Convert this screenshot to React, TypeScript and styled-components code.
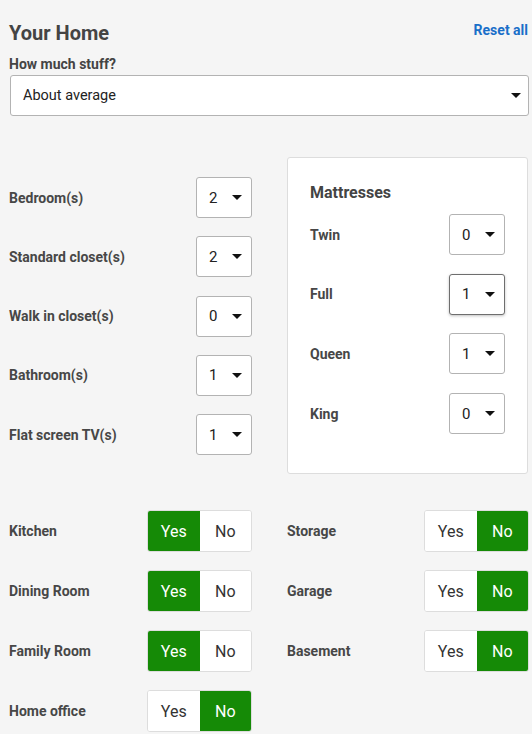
import styled, { createGlobalStyle, css } from 'styled-components';

const GlobalStyle = createGlobalStyle`
  html, body {
    margin: 0;
    padding: 0;
    background: #f5f5f5;
  }

  body {
    font-family: Roboto, "Liberation Sans", Arial, sans-serif;
    color: #444;
  }
`;

type Counter = { label: string; value: number; focused?: boolean };

const rooms: Counter[] = [
  { label: 'Bedroom(s)', value: 2 },
  { label: 'Standard closet(s)', value: 2 },
  { label: 'Walk in closet(s)', value: 0 },
  { label: 'Bathroom(s)', value: 1 },
  { label: 'Flat screen TV(s)', value: 1 },
];

const mattresses: Counter[] = [
  { label: 'Twin', value: 0 },
  { label: 'Full', value: 1, focused: true },
  { label: 'Queen', value: 1 },
  { label: 'King', value: 0 },
];

const leftToggles = [
  { label: 'Kitchen', yes: true },
  { label: 'Dining Room', yes: true },
  { label: 'Family Room', yes: true },
  { label: 'Home office', yes: false },
];

const rightToggles = [
  { label: 'Storage', yes: false },
  { label: 'Garage', yes: false },
  { label: 'Basement', yes: false },
];

function CountRow({ label, value, focused }: Counter) {
  return (
    <Row>
      <Label>{label}</Label>
      <SmallSelect $focused={focused}>
        <span>{value}</span>
        <Caret />
      </SmallSelect>
    </Row>
  );
}

function ToggleRow({ label, yes }: { label: string; yes: boolean }) {
  return (
    <ToggleLine>
      <Label>{label}</Label>
      <Toggle>
        <ToggleOption $active={yes}>Yes</ToggleOption>
        <ToggleOption $active={!yes}>No</ToggleOption>
      </Toggle>
    </ToggleLine>
  );
}

export default function App() {
  return (
    <>
      <GlobalStyle />
      <Page>
        <Header>
          <Title>Your Home</Title>
          <ResetLink href="#">Reset all</ResetLink>
        </Header>
        <FieldLabel>How much stuff?</FieldLabel>
        <WideSelect>
          <span>About average</span>
          <Caret />
        </WideSelect>

        <Columns>
          <RoomList>
            {rooms.map((r) => (
              <CountRow
                key={r.label}
                {...r}
              />
            ))}
          </RoomList>
          <Card>
            <CardTitle>Mattresses</CardTitle>
            <CardList>
              {mattresses.map((m) => (
                <CountRow
                  key={m.label}
                  {...m}
                />
              ))}
            </CardList>
          </Card>
        </Columns>

        <ToggleGrid>
          <ToggleColumn>
            {leftToggles.map((t) => (
              <ToggleRow
                key={t.label}
                {...t}
              />
            ))}
          </ToggleColumn>
          <ToggleColumn>
            {rightToggles.map((t) => (
              <ToggleRow
                key={t.label}
                {...t}
              />
            ))}
          </ToggleColumn>
        </ToggleGrid>
      </Page>
    </>
  );
}

const Page = styled.div`
  width: 520px;
  padding: 21px 3px 20px 9px;
`;

const Header = styled.div`
  display: flex;
  align-items: baseline;
  justify-content: space-between;
`;

const Title = styled.h1`
  margin: 0;
  font-size: 20px;
  line-height: 24px;
  font-weight: 700;
  color: #444;
`;

const ResetLink = styled.a`
  font-size: 14px;
  font-weight: 700;
  color: #1a6fc9;
  text-decoration: none;
  margin-right: 1px;
  position: relative;
  top: -5px;
`;

const FieldLabel = styled.div`
  margin-top: 10px;
  font-size: 14px;
  line-height: 18px;
  font-weight: 700;
`;

const selectBase = css`
  display: flex;
  align-items: center;
  justify-content: space-between;
  box-sizing: border-box;
  height: 41px;
  background: #fff;
  border: 1px solid #b3b3b3;
  border-radius: 3px;
  font-size: 15px;
  color: #222;
`;

const WideSelect = styled.div`
  ${selectBase}
  margin-top: 2px;
  margin-left: 1px;
  padding: 0 7px 0 12px;
  font-size: 14.5px;
`;

const SmallSelect = styled.div<{ $focused?: boolean }>`
  ${selectBase}
  width: 56px;
  padding: 0 9px 0 12px;
  ${({ $focused }) =>
    $focused &&
    css`
      border-color: #6e6e6e;
      box-shadow: 0 1px 3px rgba(0, 0, 0, 0.25);
    `}
`;

const Caret = styled.i`
  width: 0;
  height: 0;
  border-left: 5px solid transparent;
  border-right: 5px solid transparent;
  border-top: 5px solid #111;
`;

const Columns = styled.div`
  display: grid;
  grid-template-columns: 243px 242px;
  column-gap: 35px;
  align-items: start;
  margin-top: 41px;
`;

const RoomList = styled.div`
  display: flex;
  flex-direction: column;
  gap: 18.25px;
  padding-top: 20px;
`;

const Row = styled.div`
  display: flex;
  align-items: center;
  justify-content: space-between;
`;

const Label = styled.span`
  font-size: 14px;
  font-weight: 700;
  color: #474747;
`;

const Card = styled.div`
  box-sizing: border-box;
  height: 317px;
  margin-right: 1px;
  padding: 25px 22px 0 22px;
  background: #fff;
  border: 1px solid #ddd;
  border-radius: 3px;
`;

const CardTitle = styled.h2`
  margin: 0;
  font-size: 16px;
  line-height: 20px;
  font-weight: 700;
  color: #444;
`;

const CardList = styled.div`
  display: flex;
  flex-direction: column;
  gap: 18.7px;
  margin-top: 11px;
`;

const ToggleGrid = styled.div`
  display: grid;
  grid-template-columns: 243px 242px;
  column-gap: 35px;
  margin-top: 36px;
`;

const ToggleColumn = styled.div`
  display: flex;
  flex-direction: column;
  gap: 18px;
`;

const ToggleLine = styled.div`
  display: flex;
  align-items: center;
  justify-content: space-between;
`;

const Toggle = styled.div`
  display: flex;
  box-sizing: border-box;
  width: 105px;
  height: 42px;
  border: 1px solid #ddd;
  border-radius: 3px;
  overflow: hidden;
  background: #fff;
`;

const ToggleOption = styled.div<{ $active: boolean }>`
  flex: 1;
  display: flex;
  align-items: center;
  justify-content: center;
  font-size: 16px;
  color: ${({ $active }) => ($active ? '#fff' : '#333')};
  background: ${({ $active }) => ($active ? '#158a06' : '#fff')};
`;
